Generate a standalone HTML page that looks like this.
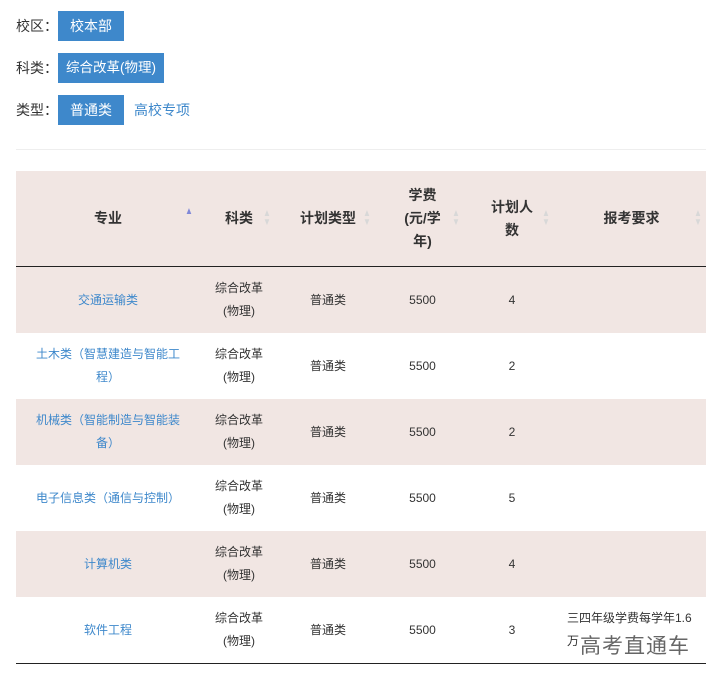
<!DOCTYPE html>
<html><head><meta charset="utf-8"><style>
body{margin:0;background:#fff;font-family:"Liberation Sans","Noto Sans CJK SC",sans-serif;color:#333;width:719px;height:683px;overflow:hidden;position:relative}
.f{position:absolute;left:16px;font-size:14px;line-height:30px;display:flex;align-items:center}
.f .b{display:inline-block;background:#3e88cb;color:#fff;padding:0 12px;height:30px;line-height:30px;margin-left:0}
.f .b2{padding:0 8px;font-size:13.5px}
.f .lab{width:42px}
.f a{color:#3e88cb;margin-left:10px}
.sep{position:absolute;left:16px;width:690px;top:149px;height:1px;background:#eee}
table{position:absolute;left:16px;top:171px;width:690px;border-collapse:collapse;font-size:12px}
th{background:#f1e6e3;height:95px;font-weight:bold;font-size:14px;line-height:23px;position:relative;border-bottom:1.5px solid #222;padding:0}
td{height:66px;text-align:center;line-height:23px;padding:0}
tr.o td{background:#f1e6e3}
td.l{color:#3e88cb}
.s{position:absolute;right:6px;top:38px;font-size:10px;line-height:9px;color:#d8d8d8;transform:scaleX(0.8)}
.s.a{color:#8088d8}
tbody tr:last-child td{border-bottom:1.5px solid #222}
.wm{position:absolute;left:580px;top:630px;font-size:21px;color:#666;letter-spacing:1px}
</style></head><body>
<div class="f" style="top:11px"><span class="lab">校区：</span><span class="b">校本部</span></div>
<div class="f" style="top:53px"><span class="lab">科类：</span><span class="b b2">综合改革(物理)</span></div>
<div class="f" style="top:95px"><span class="lab">类型：</span><span class="b">普通类</span><a>高校专项</a></div>
<div class="sep"></div>
<table>
<thead><tr>
<th style="width:184px">专业<span class="s a" style="top:36px">▲</span></th>
<th style="width:78px">科类<span class="s">▲<br>▼</span></th>
<th style="width:100px">计划类型<span class="s">▲<br>▼</span></th>
<th style="width:89px">学费<br>(元/学<br>年)<span class="s">▲<br>▼</span></th>
<th style="width:90px">计划人<br>数<span class="s">▲<br>▼</span></th>
<th>报考要求<span class="s" style="right:3px">▲<br>▼</span></th>
</tr></thead>
<tbody>
<tr class="o"><td class="l">交通运输类</td><td>综合改革<br>(物理)</td><td>普通类</td><td>5500</td><td>4</td><td></td></tr>
<tr><td class="l">土木类（智慧建造与智能工<br>程）</td><td>综合改革<br>(物理)</td><td>普通类</td><td>5500</td><td>2</td><td></td></tr>
<tr class="o"><td class="l">机械类（智能制造与智能装<br>备）</td><td>综合改革<br>(物理)</td><td>普通类</td><td>5500</td><td>2</td><td></td></tr>
<tr><td class="l">电子信息类（通信与控制）</td><td>综合改革<br>(物理)</td><td>普通类</td><td>5500</td><td>5</td><td></td></tr>
<tr class="o"><td class="l">计算机类</td><td>综合改革<br>(物理)</td><td>普通类</td><td>5500</td><td>4</td><td></td></tr>
<tr><td class="l">软件工程</td><td>综合改革<br>(物理)</td><td>普通类</td><td>5500</td><td>3</td><td style="text-align:left;padding-left:10px">三四年级学费每学年1.6<br>万</td></tr>
</tbody></table>
<div class="wm">高考直通车</div>
</body></html>
